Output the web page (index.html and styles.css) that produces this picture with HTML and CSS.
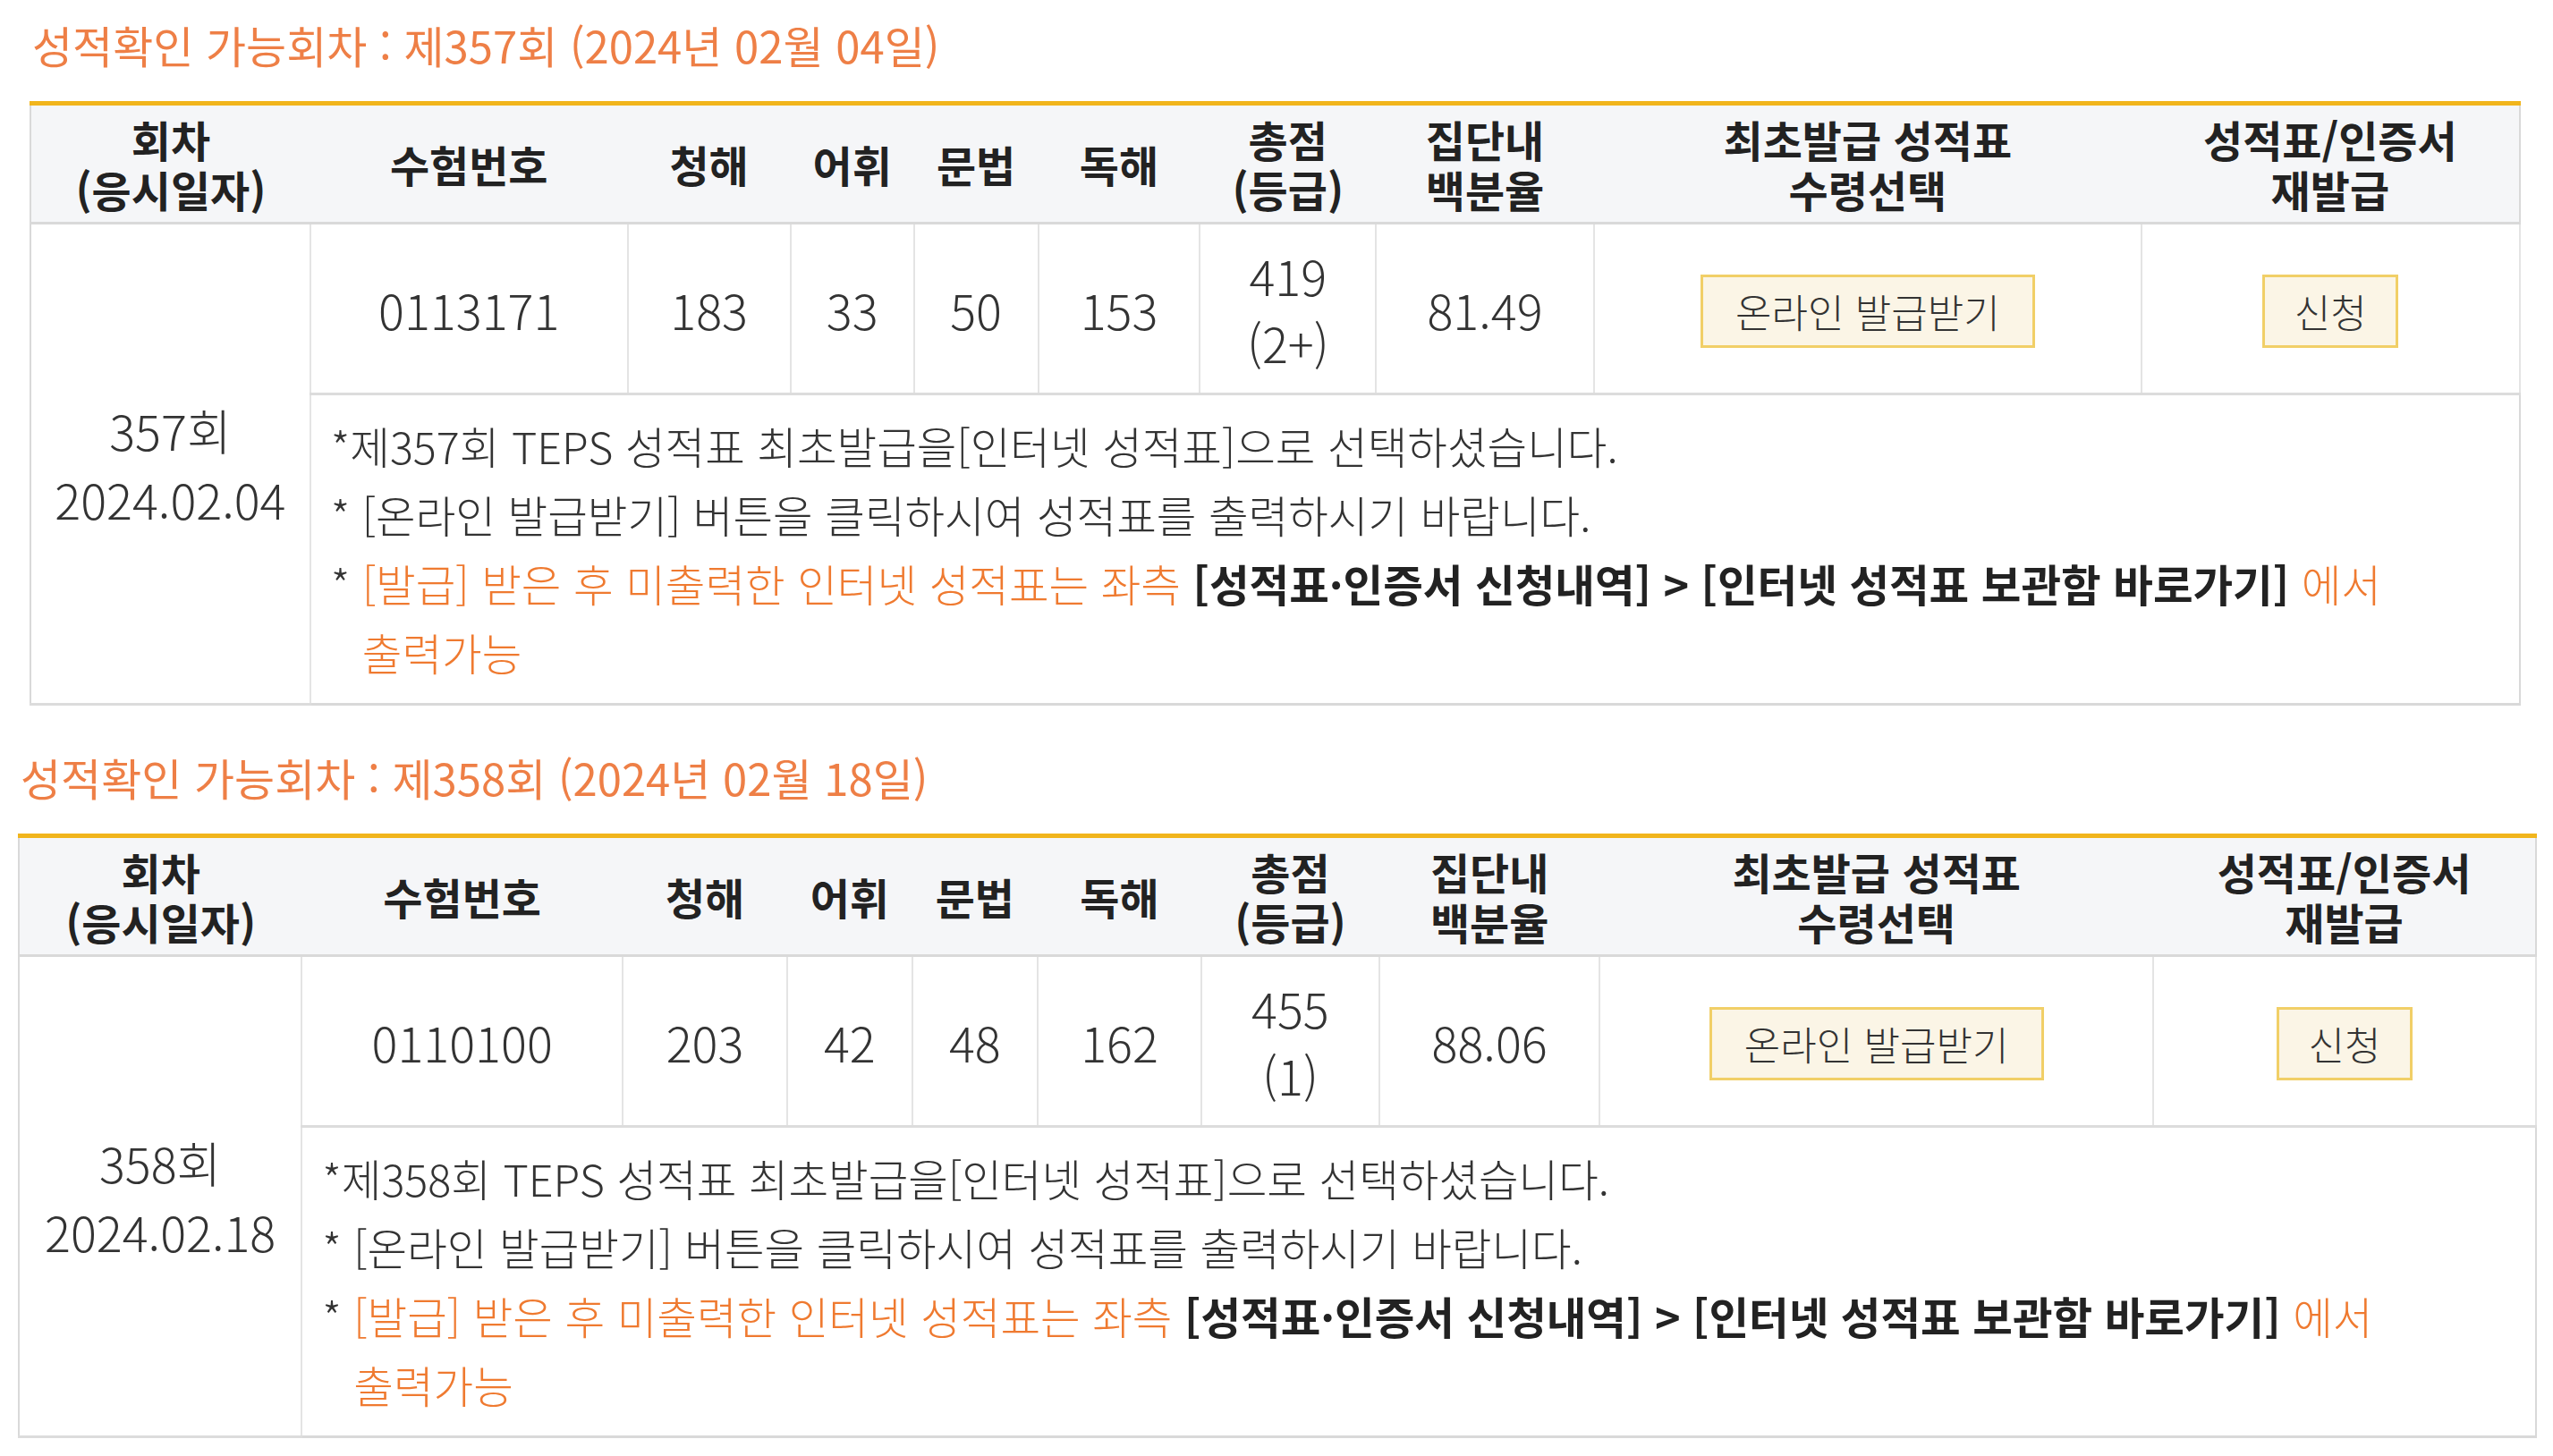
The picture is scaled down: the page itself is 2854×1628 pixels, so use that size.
FILE: index.html
```html
<!DOCTYPE html>
<html lang="ko">
<head>
<meta charset="utf-8">
<title>성적확인</title>
<link rel="stylesheet" href="styles.css">
</head>
<body>
<section class="block">
  <h2 class="title">성적확인 가능회차 : 제357회 (2024년 02월 04일)</h2>
  <table class="score-table">
    <colgroup>
      <col class="c1"><col class="c2"><col class="c3"><col class="c4"><col class="c5">
      <col class="c6"><col class="c7"><col class="c8"><col class="c9"><col class="c10">
    </colgroup>
    <thead>
      <tr>
        <th>회차<br>(응시일자)</th>
        <th>수험번호</th>
        <th>청해</th>
        <th>어휘</th>
        <th>문법</th>
        <th>독해</th>
        <th>총점<br>(등급)</th>
        <th>집단내<br>백분율</th>
        <th>최초발급 성적표<br>수령선택</th>
        <th>성적표/인증서<br>재발급</th>
      </tr>
    </thead>
    <tbody>
      <tr class="data-row">
        <td rowspan="2" class="round">357회<br>2024.02.04</td>
        <td>0113171</td>
        <td>183</td>
        <td>33</td>
        <td>50</td>
        <td>153</td>
        <td>419<br>(2+)</td>
        <td>81.49</td>
        <td><span class="btn btn-wide">온라인 발급받기</span></td>
        <td><span class="btn btn-narrow">신청</span></td>
      </tr>
      <tr class="notice-row">
        <td colspan="9" class="notice">
          <p class="line">*제357회 TEPS 성적표 최초발급을[인터넷 성적표]으로 선택하셨습니다.</p>
          <p class="line hang">* [온라인 발급받기] 버튼을 클릭하시여 성적표를 출력하시기 바랍니다.</p>
          <p class="line hang">* <span class="accent">[발급] 받은 후 미출력한 인터넷 성적표는 좌측</span> <b class="strong">[성적표·인증서 신청내역] &gt; [인터넷 성적표 보관함 바로가기]</b> <span class="accent">에서 출력가능</span></p>
        </td>
      </tr>
    </tbody>
  </table>
</section>

<section class="block block-second">
  <h2 class="title">성적확인 가능회차 : 제358회 (2024년 02월 18일)</h2>
  <table class="score-table">
    <colgroup>
      <col class="c1"><col class="c2"><col class="c3"><col class="c4"><col class="c5">
      <col class="c6"><col class="c7"><col class="c8"><col class="c9"><col class="c10">
    </colgroup>
    <thead>
      <tr>
        <th>회차<br>(응시일자)</th>
        <th>수험번호</th>
        <th>청해</th>
        <th>어휘</th>
        <th>문법</th>
        <th>독해</th>
        <th>총점<br>(등급)</th>
        <th>집단내<br>백분율</th>
        <th>최초발급 성적표<br>수령선택</th>
        <th>성적표/인증서<br>재발급</th>
      </tr>
    </thead>
    <tbody>
      <tr class="data-row">
        <td rowspan="2" class="round">358회<br>2024.02.18</td>
        <td>0110100</td>
        <td>203</td>
        <td>42</td>
        <td>48</td>
        <td>162</td>
        <td>455<br>(1)</td>
        <td>88.06</td>
        <td><span class="btn btn-wide">온라인 발급받기</span></td>
        <td><span class="btn btn-narrow">신청</span></td>
      </tr>
      <tr class="notice-row">
        <td colspan="9" class="notice">
          <p class="line">*제358회 TEPS 성적표 최초발급을[인터넷 성적표]으로 선택하셨습니다.</p>
          <p class="line hang">* [온라인 발급받기] 버튼을 클릭하시여 성적표를 출력하시기 바랍니다.</p>
          <p class="line hang">* <span class="accent">[발급] 받은 후 미출력한 인터넷 성적표는 좌측</span> <b class="strong">[성적표·인증서 신청내역] &gt; [인터넷 성적표 보관함 바로가기]</b> <span class="accent">에서 출력가능</span></p>
        </td>
      </tr>
    </tbody>
  </table>
</section>
</body>
</html>
```

FILE: styles.css
```css
html, body {
  margin: 0;
  padding: 0;
  background: #ffffff;
}

body {
  padding-top: 15px;
  font-family: "Noto Sans CJK KR", "Noto Sans", sans-serif;
  color: #333333;
}

.block {
  width: 2785px;
  padding-left: 33px;
}

.block-second {
  width: 2816px;
  padding-left: 20px;
  margin-top: 45px;
}

.title {
  margin: 0 0 28px;
  padding-left: 3px;
  font-size: 49px;
  line-height: 70px;
  font-weight: 400;
  color: #ee7f46;
}

.score-table {
  width: 100%;
  table-layout: fixed;
  border-collapse: collapse;
  border-top: 5px solid #f1b51c;
  border-left: 2px solid #d9d9d9;
  border-right: 2px solid #d9d9d9;
  border-bottom: 3px solid #d9d9d9;
}

.c1 { width: 11.24%; }
.c2 { width: 12.75%; }
.c3 { width: 6.54%; }
.c4 { width: 4.96%; }
.c5 { width: 4.99%; }
.c6 { width: 6.50%; }
.c7 { width: 7.07%; }
.c8 { width: 8.76%; }
.c9 { width: 21.98%; }
.c10 { width: 15.21%; }

.score-table th {
  height: 130px;
  padding: 0;
  background: #f5f6f8;
  border-bottom: 3px solid #d9d9d9;
  font-size: 48px;
  line-height: 56px;
  font-weight: 700;
  color: #222222;
  vertical-align: middle;
}

.score-table td {
  padding: 0;
  border: 2px solid #e4e4e4;
  text-align: center;
  vertical-align: middle;
  font-size: 54px;
  line-height: 75px;
  font-weight: 300;
  color: #333333;
}

.data-row td {
  height: 188px;
  border-bottom: 3px solid #dcdcdc;
}

.score-table td.round {
  line-height: 77px;
  border-left: 0;
}

.score-table td.notice {
  box-sizing: border-box;
  height: 344px;
  padding: 18px 22px;
  text-align: left;
  vertical-align: top;
  font-size: 48.5px;
  line-height: 77px;
  word-break: keep-all;
  border-right: 0;
  border-bottom: 0;
}

.line {
  margin: 0;
}

.hang {
  padding-left: 35px;
  text-indent: -35px;
}

.accent {
  color: #ef7a30;
}

.strong {
  font-weight: 700;
  color: #222222;
}

.btn {
  display: inline-flex;
  align-items: center;
  justify-content: center;
  box-sizing: border-box;
  height: 82px;
  border: 3px solid #f1cf67;
  background: #fbf5e6;
  font-size: 44px;
  line-height: 1;
  color: #333333;
  font-weight: 300;
  vertical-align: middle;
}

.btn-wide {
  width: 374px;
}

.btn-narrow {
  width: 152px;
}
```
